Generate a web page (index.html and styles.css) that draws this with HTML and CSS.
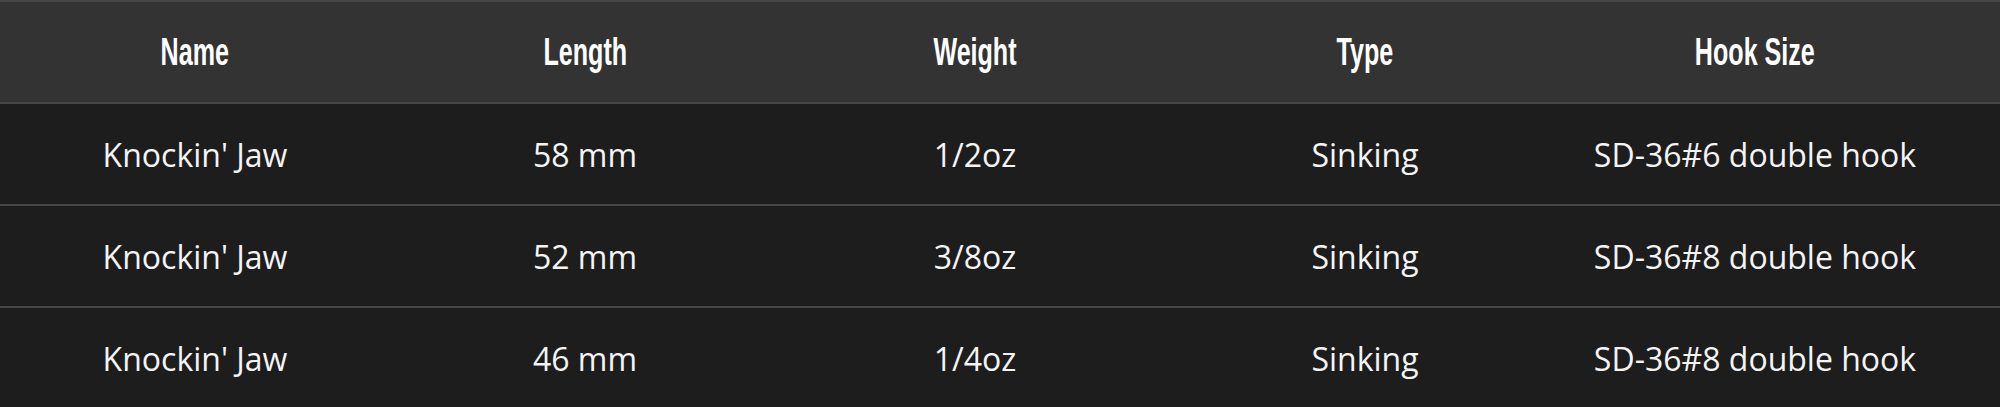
FILE: index.html
```html
<!DOCTYPE html>
<html lang="en">
<head>
<meta charset="utf-8">
<title>Knockin' Jaw specs</title>
<link rel="stylesheet" href="styles.css">
</head>
<body>
<div class="spec-table">
  <div class="row head">
    <div class="cell"><span class="h">Name</span></div>
    <div class="cell"><span class="h">Length</span></div>
    <div class="cell"><span class="h">Weight</span></div>
    <div class="cell"><span class="h">Type</span></div>
    <div class="cell"><span class="h">Hook Size</span></div>
  </div>
  <div class="row">
    <div class="cell"><span class="t">Knockin' Jaw</span></div>
    <div class="cell"><span class="t">58 mm</span></div>
    <div class="cell"><span class="t">1/2oz</span></div>
    <div class="cell"><span class="t">Sinking</span></div>
    <div class="cell"><span class="t">SD-36#6 double hook</span></div>
  </div>
  <div class="row">
    <div class="cell"><span class="t">Knockin' Jaw</span></div>
    <div class="cell"><span class="t">52 mm</span></div>
    <div class="cell"><span class="t">3/8oz</span></div>
    <div class="cell"><span class="t">Sinking</span></div>
    <div class="cell"><span class="t">SD-36#8 double hook</span></div>
  </div>
  <div class="row">
    <div class="cell"><span class="t">Knockin' Jaw</span></div>
    <div class="cell"><span class="t">46 mm</span></div>
    <div class="cell"><span class="t">1/4oz</span></div>
    <div class="cell"><span class="t">Sinking</span></div>
    <div class="cell"><span class="t">SD-36#8 double hook</span></div>
  </div>
</div>
</body>
</html>
```
FILE: styles.css
```css
html, body {
  margin: 0;
  padding: 0;
  background: #1d1d1d;
}
.spec-table {
  width: 2000px;
  border-top: 2px solid #474747;
  color: #ffffff;
}
.row {
  display: grid;
  grid-template-columns: repeat(5, 390px) 1fr;
  height: 100px;
  background: #1d1d1d;
  border-bottom: 2px solid #474747;
}
.row.head {
  background: #333333;
}
.cell {
  display: flex;
  align-items: center;
  justify-content: center;
}
.h {
  display: inline-block;
  font-family: "Liberation Sans Narrow", "Liberation Sans", sans-serif;
  font-weight: bold;
  font-size: 38px;
  transform: scaleX(0.66);
  white-space: nowrap;
}
.t {
  display: inline-block;
  font-family: "Open Sans", "Noto Sans", sans-serif;
  font-size: 32px;
  white-space: nowrap;
  color: #f4f4f4;
}
```
